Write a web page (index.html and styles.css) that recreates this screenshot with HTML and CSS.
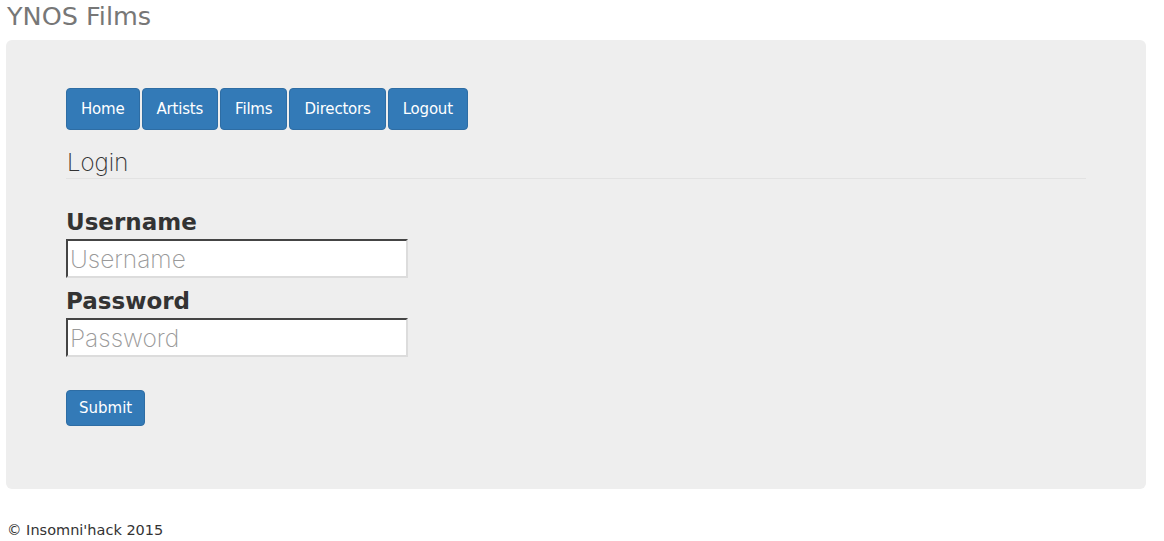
FILE: index.html
```html
<!DOCTYPE html>
<html>
<head>
<meta charset="utf-8">
<title>YNOS Films</title>
<link rel="stylesheet" href="styles.css">
</head>
<body>
<div class="page">
  <div class="brand">YNOS Films</div>
  <div class="jumbotron">
    <nav class="nav">
      <a class="btn nav-btn" href="#">Home</a>
      <a class="btn nav-btn" href="#">Artists</a>
      <a class="btn nav-btn" href="#">Films</a>
      <a class="btn nav-btn" href="#">Directors</a>
      <a class="btn nav-btn" href="#">Logout</a>
    </nav>
    <h2 class="page-header">Login</h2>
    <form class="login-form">
      <label class="label label-first" for="username">Username</label>
      <input class="field" id="username" type="text" placeholder="Username">
      <label class="label" for="password">Password</label>
      <input class="field" id="password" type="password" placeholder="Password">
      <div class="actions">
        <button class="btn submit-btn" type="button">Submit</button>
      </div>
    </form>
  </div>
  <footer class="footer">© Insomni'hack 2015</footer>
</div>
</body>
</html>
```
FILE: styles.css
```css
html, body {
  margin: 0;
  padding: 0;
  background: #fff;
}
body {
  font-family: "DejaVu Sans", Verdana, sans-serif;
  color: #333;
}
.page {
  width: 1140px;
  margin-left: 6px;
}
.brand {
  height: 40px;
  font-size: 25.5px;
  line-height: 32px;
  color: #777;
  padding-left: 1px;
}
.jumbotron {
  background: #eee;
  border-radius: 6px;
  padding: 48px 60px 48px 60px;
}
.nav {
  display: flex;
  gap: 2px;
}
.btn {
  display: inline-block;
  background: #337ab7;
  border: 1px solid #2e6da4;
  border-radius: 4px;
  color: #fff;
  font-family: "DejaVu Sans", Verdana, sans-serif;
  font-size: 15px;
  text-decoration: none;
}
.nav-btn {
  padding: 9px 14px;
  line-height: 22px;
  letter-spacing: -0.2px;
}
.page-header {
  margin: 20px 0 0 0;
  padding-left: 1px;
  font-family: Inter, "DejaVu Sans", sans-serif;
  font-size: 24px;
  font-weight: 200;
  line-height: 26px;
  padding-bottom: 2px;
  border-bottom: 1px solid #e2e2e2;
  color: #333;
}
.login-form {
  display: flex;
  flex-direction: column;
  align-items: flex-start;
  margin-bottom: 15px;
}
.label {
  font-size: 23px;
  font-weight: bold;
  line-height: 28px;
  margin-top: 9px;
  margin-bottom: 3px;
  color: #333;
}
.label-first {
  margin-top: 29px;
}
.field {
  box-sizing: border-box;
  width: 342px;
  height: 39px;
  margin: 0;
  padding: 0 2px;
  border-style: solid;
  border-width: 2px;
  border-color: #444 #dcdcdc #dcdcdc #444;
  background: #fff;
  font-family: Inter, "DejaVu Sans", sans-serif;
  font-size: 24.5px;
  font-weight: 200;
  color: #333;
}
.field::placeholder {
  color: #999;
}
.actions {
  margin-top: 33px;
}
.submit-btn {
  padding: 6px 12px;
  line-height: 22px;
  cursor: pointer;
}
.footer {
  margin-top: 31px;
  font-size: 14.5px;
  line-height: 20px;
  padding-left: 1px;
  color: #333;
}
```
